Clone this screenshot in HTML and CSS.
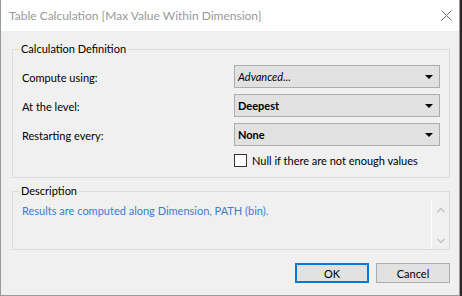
FILE: index.html
```html
<!DOCTYPE html>
<html lang="en">
<head>
    <meta charset="UTF-8">
    <title>Table Calculation</title>
    <link rel="stylesheet" href="styles.css">
</head>
<body>
    <div class="window">
        <div class="titlebar">
            <span class="title">Table Calculation [Max Value Within Dimension]</span>
            <svg class="close" width="11" height="11" viewBox="0 0 11 11">
                <path d="M0.5 0.5 L10.5 10.5 M10.5 0.5 L0.5 10.5" stroke="#707070" stroke-width="1" fill="none"/>
            </svg>
        </div>

        <fieldset class="group definition">
            <legend>Calculation Definition</legend>
            <div class="form-grid">
                <label>Compute using:</label>
                <div class="dropdown italic"><span>Advanced...</span><span class="arrow"></span></div>

                <label>At the level:</label>
                <div class="dropdown bold"><span>Deepest</span><span class="arrow"></span></div>

                <label>Restarting every:</label>
                <div class="dropdown bold"><span>None</span><span class="arrow"></span></div>

                <div></div>
                <label class="check"><span class="box"></span>Null if there are not enough values</label>
            </div>
        </fieldset>

        <fieldset class="group description">
            <legend>Description</legend>
            <div class="desc-area">
                <p class="desc-text">Results are computed along Dimension, PATH (bin).</p>
                <div class="scrollbar">
                    <svg width="8" height="6" viewBox="0 0 8 6"><path d="M0.5 5 L4 1.5 L7.5 5" stroke="#c2c2c2" stroke-width="1.4" fill="none"/></svg>
                    <svg width="8" height="6" viewBox="0 0 8 6"><path d="M0.5 1 L4 4.5 L7.5 1" stroke="#c2c2c2" stroke-width="1.4" fill="none"/></svg>
                </div>
            </div>
        </fieldset>

        <div class="buttons">
            <button class="btn default">OK</button>
            <button class="btn">Cancel</button>
        </div>
    </div>
</body>
</html>
```

FILE: styles.css
```css
body {
    margin: 0;
    background-color: #2e262a;
    font-family: Lato, "Liberation Sans", sans-serif;
    font-size: 11px;
    color: #000;
}
.window {
    width: 460px;
    height: 296px;
    box-sizing: border-box;
    background: #f0f0f0;
    border: 1px solid #9a9a9a;
    border-top: none;
    display: flex;
    flex-direction: column;
}
.titlebar {
    height: 31px;
    background: #fff;
    display: flex;
    align-items: center;
    justify-content: space-between;
    padding: 0 7px 0 8px;
}
.title {
    color: #999;
    font-size: 12px;
    padding-bottom: 1px;
}
.close {
    margin-bottom: 1px;
}
.group {
    margin: 0 9px 0 11px;
    padding: 0;
    border: 1px solid #dcdcdc;
    min-width: 0;
}
.group legend {
    margin-left: 6px;
    padding: 0 2px;
    line-height: 16px;
}
.definition {
    margin-top: 10px;
}
.form-grid {
    display: grid;
    grid-template-columns: 1fr 206px;
    grid-template-rows: 23px 23px 23px 16px;
    row-gap: 6px;
    align-items: center;
    padding: 8px 9px 9px 9px;
}
.form-grid > label {
    padding-top: 2px;
}
.dropdown {
    height: 23px;
    box-sizing: border-box;
    background: #e1e1e1;
    border: 1px solid #adadad;
    display: flex;
    align-items: center;
    justify-content: space-between;
    padding: 0 6px 0 3px;
}
.italic {
    font-style: italic;
}
.bold {
    font-weight: bold;
}
.arrow {
    width: 0;
    height: 0;
    border-left: 4px solid transparent;
    border-right: 4px solid transparent;
    border-top: 4px solid #000;
}
.form-grid .check {
    display: flex;
    align-items: center;
    gap: 5px;
    height: 16px;
    padding-top: 0;
}
.box {
    width: 13px;
    height: 13px;
    box-sizing: border-box;
    background: #fff;
    border: 1px solid #333;
}
.description {
    margin-top: 5px;
}
.desc-area {
    display: flex;
    height: 50px;
}
.desc-text {
    flex: 1;
    margin: 0;
    padding: 4px 9px;
    line-height: 16px;
    color: #3f7bd6;
}
.scrollbar {
    width: 17px;
    margin-top: 1px;
    border-left: 1px solid #fff;
    display: flex;
    flex-direction: column;
    justify-content: space-between;
    align-items: center;
    padding: 7px 0 5px;
}
.buttons {
    display: flex;
    justify-content: flex-end;
    gap: 7px;
    margin: 13px 9px 0 0;
}
.btn {
    width: 74px;
    height: 20px;
    box-sizing: border-box;
    background: #e1e1e1;
    border: 1px solid #adadad;
    font-family: inherit;
    font-size: 11px;
    padding: 0;
    color: #000;
}
.btn.default {
    border: 2px solid #0078d7;
}
```
